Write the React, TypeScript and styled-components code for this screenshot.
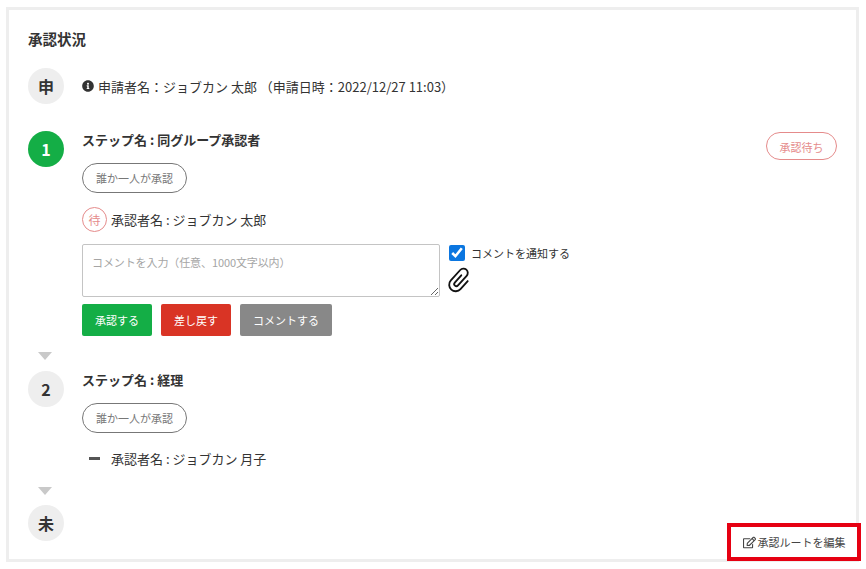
import styled, { createGlobalStyle } from 'styled-components';
import { FaInfoCircle, FaRegEdit } from 'react-icons/fa';

const GlobalStyle = createGlobalStyle`
  html, body {
    margin: 0;
    background: #fff;
  }
  body {
    font-family: "Noto Sans CJK JP", "Noto Sans", sans-serif;
    color: #333;
  }
`;

const Page = styled.div`
  width: 866px;
  height: 569px;
  padding: 7px 7px 7px 6px;
  box-sizing: border-box;
  position: relative;
  overflow: hidden;
`;

const Panel = styled.section`
  height: 555px;
  box-sizing: border-box;
  border: 3px solid #eeeeee;
  padding: 17px 19px 0;
`;

const Title = styled.h2`
  margin: 0 0 17px;
  font-size: 14.5px;
  line-height: 24px;
  font-weight: 700;
`;

const Step = styled.div<{ $gapTop?: number }>`
  display: flex;
  gap: 18px;
  margin-top: ${(p) => p.$gapTop ?? 0}px;
`;

const Circle = styled.div<{ $active?: boolean }>`
  flex: none;
  width: 36px;
  height: 36px;
  border-radius: 50%;
  display: flex;
  align-items: center;
  justify-content: center;
  font-size: 16px;
  font-weight: 700;
  background: ${(p) => (p.$active ? '#14ae46' : '#eeeeee')};
  color: ${(p) => (p.$active ? '#fff' : '#333')};
`;

const StepBody = styled.div`
  flex: 1;
  min-width: 0;
`;

const Applicant = styled.div`
  display: flex;
  align-items: center;
  gap: 4px;
  height: 36px;
  font-size: 13px;
  svg {
    width: 12px;
    height: 12px;
    color: #333;
  }
`;

const StepHead = styled.div`
  display: flex;
  justify-content: space-between;
  align-items: flex-start;
  height: 32px;
`;

const StepName = styled.div`
  margin-top: -1px;
  font-size: 13px;
  line-height: 20px;
  font-weight: 700;
`;

const Status = styled.div`
  width: 71px;
  height: 28px;
  margin-top: 1px;
  padding-top: 1px;
  box-sizing: border-box;
  border: 1px solid #e58b8b;
  border-radius: 14px;
  color: #e58b8b;
  font-size: 11px;
  display: flex;
  align-items: center;
  justify-content: center;
`;

const Pill = styled.div`
  width: 105px;
  height: 30px;
  box-sizing: border-box;
  border: 1px solid #777;
  border-radius: 15px;
  color: #777;
  font-size: 11px;
  display: flex;
  align-items: center;
  justify-content: center;
`;

const Approver = styled.div<{ $gapTop: number }>`
  display: flex;
  align-items: center;
  gap: 4px;
  height: 25px;
  margin-top: ${(p) => p.$gapTop}px;
  font-size: 13px;
`;

const Wait = styled.span`
  width: 25px;
  height: 25px;
  box-sizing: border-box;
  border: 1px solid #e58b8b;
  border-radius: 50%;
  color: #e58b8b;
  font-size: 12px;
  display: flex;
  align-items: center;
  justify-content: center;
`;

const Dash = styled.span`
  width: 25px;
  height: 25px;
  display: flex;
  align-items: center;
  justify-content: center;
  &::before {
    content: '';
    width: 11px;
    height: 3px;
    background: #555;
  }
`;

const CommentRow = styled.div`
  display: flex;
  gap: 9px;
  margin-top: 12px;
`;

const Comment = styled.textarea`
  width: 358px;
  height: 53px;
  box-sizing: border-box;
  margin: 0;
  padding: 9px 9px;
  border: 1px solid #c4c4c4;
  border-radius: 2px;
  font-family: inherit;
  font-size: 11px;
  letter-spacing: -0.1px;
  outline: none;
  &::placeholder {
    color: #a5a5a5;
  }
`;

const Side = styled.div`
  display: flex;
  flex-direction: column;
  align-items: flex-start;
  gap: 6px;
`;

const Notify = styled.label`
  display: flex;
  align-items: center;
  gap: 6px;
  margin-top: 1px;
  font-size: 11px;
  color: #333;
  input {
    width: 16px;
    height: 16px;
    margin: 0;
    accent-color: #0b76e0;
  }
`;

const Actions = styled.div`
  display: flex;
  gap: 9px;
  margin-top: 7px;
`;

const Action = styled.button<{ $color: string; $width: number }>`
  width: ${(p) => p.$width}px;
  height: 32px;
  padding: 0;
  border: none;
  border-radius: 2px;
  background: ${(p) => p.$color};
  color: #fff;
  font-family: inherit;
  font-size: 11px;
`;

const Arrow = styled.div<{ $top: number; $bottom: number }>`
  width: 0;
  height: 0;
  margin: ${(p) => p.$top}px 0 ${(p) => p.$bottom}px 10px;
  border-left: 7px solid transparent;
  border-right: 7px solid transparent;
  border-top: 8px solid #c9c9c9;
`;

const EditLink = styled.div`
  position: absolute;
  right: 5px;
  bottom: 8px;
  width: 134px;
  height: 38px;
  box-sizing: border-box;
  border: 4px solid #e60012;
  display: flex;
  align-items: center;
  justify-content: center;
  gap: 2px;
  font-size: 11px;
  color: #444;
  background: #fff;
  svg {
    width: 13px;
    height: 13px;
  }
`;

const ClipIcon = styled.svg`
  margin-left: -2px;
`;

const Clip = () => (
  <ClipIcon width="26" height="26" viewBox="0 0 26 26" fill="none" stroke="#111" strokeWidth="1.7" strokeLinecap="round" strokeLinejoin="round">
    <path transform="rotate(42 13 13) translate(0 0) scale(1.08)" d="M10 8V17a2 2 0 0 0 4 0V5a4 4 0 0 0-8 0V18a6 6 0 0 0 12 0V8" />
  </ClipIcon>
);

export default function App() {
  return (
    <Page>
      <GlobalStyle />
      <Panel>
        <Title>承認状況</Title>
        <Step>
          <Circle>申</Circle>
          <StepBody>
            <Applicant>
              <FaInfoCircle />
              申請者名：ジョブカン 太郎 （申請日時：2022/12/27 11:03）
            </Applicant>
          </StepBody>
        </Step>
        <Step $gapTop={27}>
          <Circle $active>1</Circle>
          <StepBody>
            <StepHead>
              <StepName>ステップ名 : 同グループ承認者</StepName>
              <Status>承認待ち</Status>
            </StepHead>
            <Pill>誰か一人が承認</Pill>
            <Approver $gapTop={14}>
              <Wait>待</Wait>
              承認者名 : ジョブカン 太郎
            </Approver>
            <CommentRow>
              <Comment placeholder="コメントを入力（任意、1000文字以内）" />
              <Side>
                <Notify>
                  <input type="checkbox" defaultChecked readOnly />
                  コメントを通知する
                </Notify>
                <Clip />
              </Side>
            </CommentRow>
            <Actions>
              <Action $color="#14ae46" $width={70}>承認する</Action>
              <Action $color="#d93425" $width={70}>差し戻す</Action>
              <Action $color="#888888" $width={92}>コメントする</Action>
            </Actions>
          </StepBody>
        </Step>
        <Arrow $top={16} $bottom={11} />
        <Step>
          <Circle>2</Circle>
          <StepBody>
            <StepHead>
              <StepName>ステップ名 : 経理</StepName>
            </StepHead>
            <Pill>誰か一人が承認</Pill>
            <Approver $gapTop={13}>
              <Dash />
              承認者名 : ジョブカン 月子
            </Approver>
          </StepBody>
        </Step>
        <Arrow $top={16} $bottom={10} />
        <Step>
          <Circle>未</Circle>
        </Step>
      </Panel>
      <EditLink>
        <FaRegEdit />
        承認ルートを編集
      </EditLink>
    </Page>
  );
}
